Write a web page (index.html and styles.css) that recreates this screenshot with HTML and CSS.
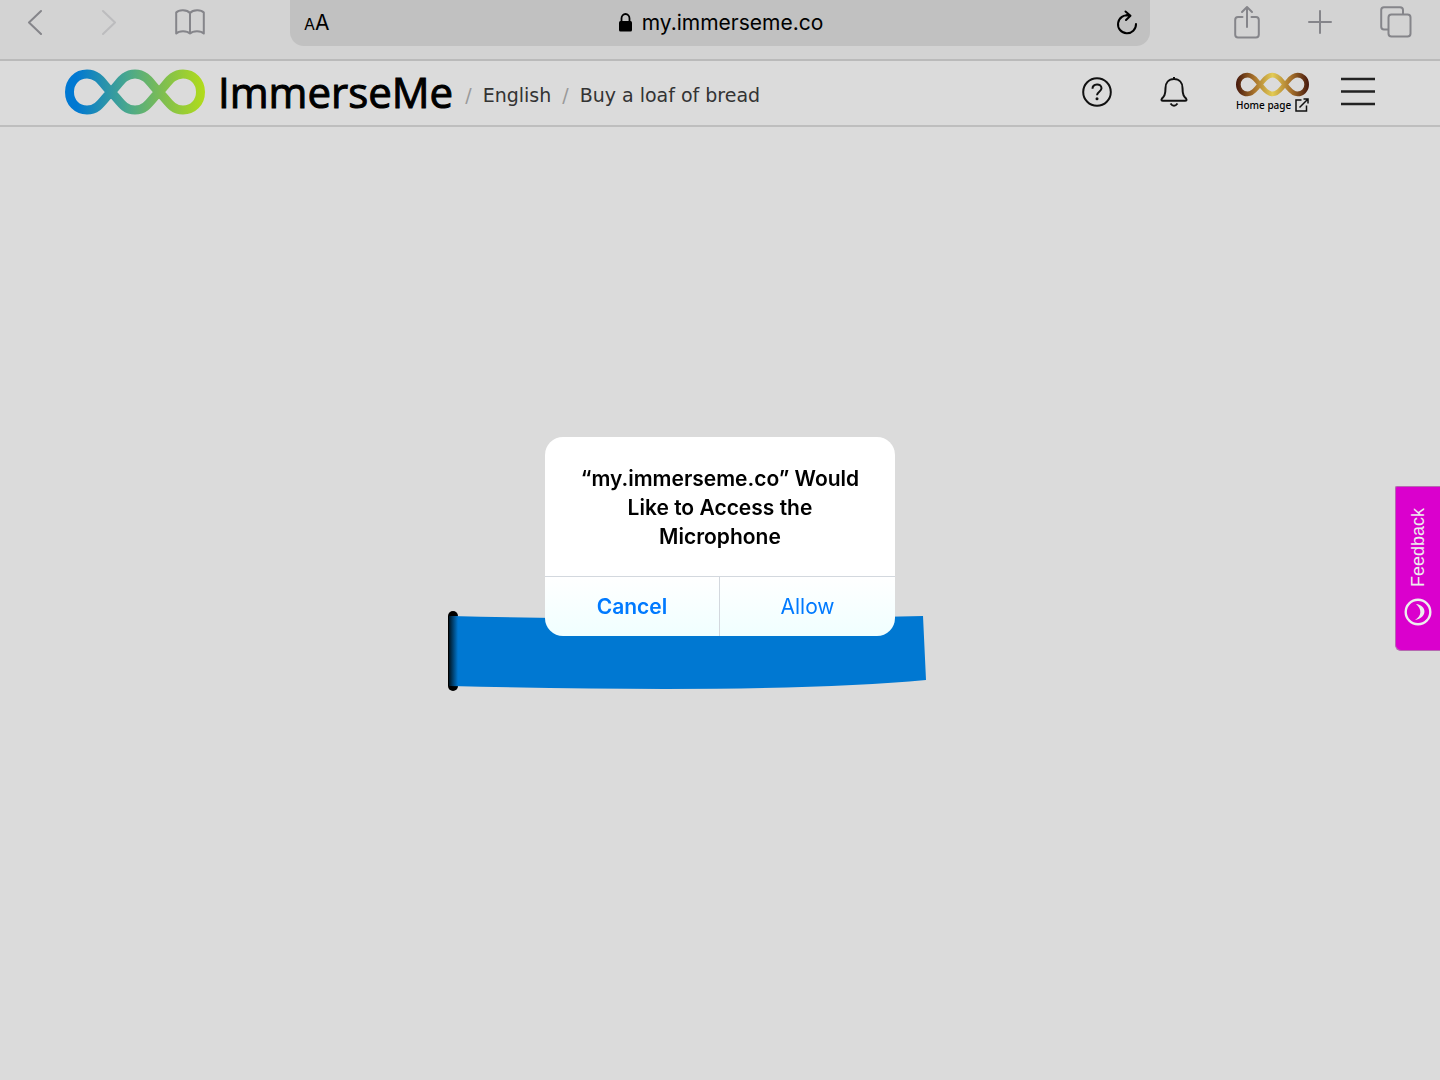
FILE: index.html
```html
<!DOCTYPE html>
<html lang="en">
<head>
    <meta charset="UTF-8">
    <meta name="viewport" content="width=device-width, initial-scale=1.0">
    <title>ImmerseMe</title>
    <link rel="stylesheet" href="styles.css">
</head>
<body>
    <div class="browser-bar">
        <div class="browser-nav">
            <button class="icon-btn" aria-label="Back">
                <svg width="16" height="26" viewBox="0 0 16 26"><path d="M14 2L2 13.500L14 25" /></svg>
            </button>
            <button class="icon-btn faded" aria-label="Forward" disabled>
                <svg width="16" height="26" viewBox="0 0 16 26"><path d="M2 2L14 13.500L2 25" /></svg>
            </button>
            <button class="icon-btn" aria-label="Bookmarks">
                <svg width="30" height="26" viewBox="0 0 30 26"><path d="M15 4C12 .5 4 .3 1.200 3.500V24.500C4 21.500 12 21.500 15 24.500C18 21.500 26 21.500 28.800 24.500V3.500C26 .3 18 .5 15 4V24.500" /></svg>
            </button>
        </div>
        <div class="address-bar">
            <button class="text-size" aria-label="Text size"><small>A</small>A</button>
            <div class="address">
                <svg width="13" height="19" viewBox="0 0 13 19"><rect x="0" y="8" width="13" height="10.500" rx="1.500" /><path d="M2.500 9V5.500a4 4.500 0 0 1 8 0V9" fill="none" stroke="#000" stroke-width="1.800" /></svg>
                <span>my.immerseme.co</span>
            </div>
            <button class="icon-btn reload" aria-label="Reload">
                <svg width="22" height="26" viewBox="0 0 22 26"><path d="M20 14A9 9 0 1 1 13 5.500L10 5.200M9.500 1.500L14.500 5.700L10 10" /></svg>
            </button>
        </div>
        <div class="browser-actions">
            <button class="icon-btn" aria-label="Share">
                <svg width="26" height="34" viewBox="0 0 26 34"><path d="M8.500 12H4Q1.200 12 1.200 15V29.500Q1.200 32.500 4 32.500H22Q24.800 32.500 24.800 29.500V15Q24.800 12 22 12H17.500M13 22V2M8 7L13 2L18 7" /></svg>
            </button>
            <button class="icon-btn" aria-label="New tab">
                <svg width="24" height="24" viewBox="0 0 24 24"><path d="M12 1V23M1 12H23" /></svg>
            </button>
            <button class="icon-btn" aria-label="Tabs">
                <svg width="32" height="32" viewBox="0 0 32 32"><rect x="8.500" y="8.500" width="22" height="22" rx="3" /><path d="M8 23.500H4Q1.200 23.500 1.200 20.500V4Q1.200 1.200 4 1.200H20Q23 1.200 23 4V8" /></svg>
            </button>
        </div>
    </div>

    <header class="site-header">
        <a class="brand" href="#">
            <svg class="loops" width="140" height="46" viewBox="0 0 140 45">
                <defs>
                    <linearGradient id="brand-color" gradientUnits="userSpaceOnUse" x1="0" y1="0" x2="140" y2="0">
                        <stop offset="0.080" stop-color="#0078d2" />
                        <stop offset="0.450" stop-color="#4aa88c" />
                        <stop offset="0.700" stop-color="#7fbe50" />
                        <stop offset="1" stop-color="#b2dc1a" />
                    </linearGradient>
                    <path id="loops" d="M4.500 22.500C4.500 12 12 4.500 22 4.500C34 4.500 38 15 46 22.500C54 30 58 40.500 70 40.500C82 40.500 86 30 94 22.500C102 15 106 4.500 118 4.500C128 4.500 135.500 12 135.500 22.500C135.500 33 128 40.500 118 40.500C106 40.500 102 30 94 22.500C86 15 82 4.500 70 4.500C58 4.500 54 15 46 22.500C38 30 34 40.500 22 40.500C12 40.500 4.500 33 4.500 22.500Z" />
                </defs>
                <use href="#loops" stroke="url(#brand-color)" />
            </svg>
            <span class="brand-name">ImmerseMe</span>
        </a>
        <nav class="breadcrumb" aria-label="Breadcrumb">
            <span class="slash">/</span>
            <a href="#">English</a>
            <span class="slash">/</span>
            <a href="#">Buy a loaf of bread</a>
        </nav>
        <div class="header-tools">
            <button class="tool" aria-label="Help">
                <svg width="30" height="30" viewBox="0 0 30 30"><circle cx="15" cy="15" r="13.800" /><path d="M10.500 11.800C10.500 6 19.500 6 19.500 11.300C19.500 14.700 15 14.700 15 18.200" stroke-width="2" /><circle class="dot" cx="15" cy="21.800" r="1.500" /></svg>
            </button>
            <button class="tool" aria-label="Notifications">
                <svg width="28" height="30" viewBox="0 0 28 30"><path d="M14 0V2M14 2C8.500 2 5.500 6 5.500 11C5.500 18 4 19.500 2 21.500Q.5 23.800 3 23.800H25Q27.500 23.800 26 21.500C24 19.500 22.500 18 22.500 11C22.500 6 19.500 2 14 2ZM10.500 26.500Q14 31 17.500 26.500" /></svg>
            </button>
            <a class="home-link" href="#">
                <svg class="loops" width="73" height="25" viewBox="0 0 140 45">
                    <defs>
                        <linearGradient id="gold-color" gradientUnits="userSpaceOnUse" x1="0" y1="0" x2="140" y2="0">
                            <stop offset="0" stop-color="#45170c" />
                            <stop offset="0.250" stop-color="#a8732c" />
                            <stop offset="0.500" stop-color="#e2cb55" />
                            <stop offset="0.750" stop-color="#a8732c" />
                            <stop offset="1" stop-color="#45170c" />
                        </linearGradient>
                    </defs>
                    <use href="#loops" stroke="url(#gold-color)" />
                </svg>
                <span class="home-label">
                    Home page
                    <svg width="14" height="14" viewBox="0 0 14 14"><path d="M6.500 2H1V13H11.500V7.500M4.500 9.500L13 1M8.500 1H13V5.500" /></svg>
                </span>
            </a>
            <button class="tool" aria-label="Menu">
                <svg width="34" height="30" viewBox="0 0 34 30"><path d="M0 2H34M0 14.500H34M0 27H34" stroke="#222" stroke-width="2.400" /></svg>
            </button>
        </div>
    </header>

    <main class="stage">
        <!-- page-turning loader -->
        <svg class="loader" width="544" height="82" viewBox="0 0 544 82" role="img" aria-label="Loading">
            <defs>
                <linearGradient id="spine" x1="0" x2="1" y1="0" y2="0">
                    <stop offset="0" stop-color="#001522" />
                    <stop offset="1" stop-color="#0078d2" />
                </linearGradient>
            </defs>
            <path d="M5 5V75" stroke="#000" stroke-width="10" stroke-linecap="round" />
            <path d="M3 5Q250 11 475 5L478 69Q330 83 3 75Z" fill="#0078d2" />
            <rect x="1" y="5" width="9" height="70" fill="url(#spine)" />
        </svg>
    </main>

    <button class="feedback">
        <svg width="28" height="28" viewBox="0 0 28 28"><circle cx="14" cy="14" r="12.300" fill="none" stroke="#eee" stroke-width="2.400" /><path d="M12 6C23 7 24 20 11 22C18 18 18 11 12 6Z" fill="#eee" /></svg>
        <span>Feedback</span>
    </button>

    <div class="overlay">
        <div class="dialog" role="alertdialog" aria-labelledby="dialog-title">
            <h1 id="dialog-title">“my.immerseme.co” Would Like to Access the Microphone</h1>
            <div class="dialog-buttons">
                <button class="cancel">Cancel</button>
                <button>Allow</button>
            </div>
        </div>
    </div>
</body>
</html>
```
FILE: styles.css
```css
* {
    box-sizing: border-box;
}
body {
    margin: 0;
    min-height: 100vh;
    display: flex;
    flex-direction: column;
    background-color: #dbdbdb;
    color: #000;
    font-family: Inter, "Liberation Sans", sans-serif;
}
button {
    padding: 0;
    border: none;
    background: none;
    color: inherit;
    font-family: inherit;
    cursor: pointer;
}
a {
    color: inherit;
    text-decoration: none;
}
svg {
    display: block;
    flex: none;
}

/* Browser toolbar */
.browser-bar {
    display: grid;
    grid-template-columns: 290px 1fr 290px;
    height: 61px;
    background-color: #d3d3d3;
    border-bottom: 2px solid #bababa;
}
.browser-nav, .browser-actions {
    display: flex;
    align-items: center;
    height: 44px;
}
.browser-nav {
    gap: 58px;
    padding-left: 27px;
}
.browser-actions {
    justify-content: flex-end;
    gap: 48px;
    padding-right: 28px;
}
.icon-btn svg {
    fill: none;
    stroke: #85858a;
    stroke-width: 2;
    stroke-linecap: round;
    stroke-linejoin: round;
}
.icon-btn.faded svg {
    stroke: #bcbcbe;
}
.icon-btn.reload svg {
    stroke: #000;
}
.address-bar {
    display: grid;
    grid-template-columns: 1fr auto 1fr;
    align-items: center;
    height: 46px;
    padding: 0 12px 1px 14px;
    background-color: #c1c1c1;
    border-radius: 0 0 14px 14px;
}
.text-size {
    justify-self: start;
    font-size: 21px;
}
.text-size small {
    font-size: 16px;
}
.reload {
    justify-self: end;
}
.address {
    display: flex;
    align-items: center;
    gap: 10px;
    font-size: 21px;
}

/* Site header */
.site-header {
    display: flex;
    align-items: center;
    height: 66px;
    padding: 0 65px 2px;
    border-bottom: 2px solid #bebebe;
}
.brand {
    display: flex;
    align-items: center;
    gap: 13px;
}
.loops {
    fill: none;
    stroke-width: 9;
}
.brand-name {
    font-family: "Open Sans", sans-serif;
    font-size: 42px;
    font-weight: 500;
    line-height: 60px;
    -webkit-text-stroke: 1px #000;
}
.breadcrumb {
    display: flex;
    gap: 11px;
    padding: 5px 0 0 12px;
    color: #333;
    font-family: Verdana, "DejaVu Sans", sans-serif;
    font-size: 19px;
    white-space: nowrap;
}
.slash {
    color: #999;
}
.header-tools {
    display: flex;
    align-items: center;
    gap: 48px;
    margin-left: auto;
}
.tool svg {
    fill: none;
    stroke: #111;
    stroke-width: 2;
}
.tool .dot {
    fill: #111;
    stroke: none;
}
.home-link {
    display: flex;
    flex-direction: column;
    gap: 1px;
    margin-right: -16px;
}
.home-label {
    display: flex;
    align-items: center;
    justify-content: space-between;
    font-family: "Noto Sans", sans-serif;
    font-size: 10px;
    font-weight: 500;
    line-height: 14px;
    white-space: nowrap;
}
.home-label svg {
    fill: none;
    stroke: #111;
    stroke-width: 1.5;
}

/* Loader */
.stage {
    flex: 1;
    display: flex;
    align-items: center;
    justify-content: center;
    padding-top: 96px;
}

/* Feedback tab */
.feedback {
    position: fixed;
    top: 45%;
    right: 0;
    display: flex;
    flex-direction: column-reverse;
    align-items: center;
    justify-content: space-between;
    width: 45px;
    height: 165px;
    padding: 21px 0 24px;
    background-color: #da00cd;
    border: 1px solid #b56ab0;
    border-right: none;
    border-radius: 2px 0 0 6px;
    color: #eee;
    font-family: "Liberation Sans", Arial, sans-serif;
    font-size: 18px;
}
.feedback span {
    writing-mode: vertical-rl;
    transform: rotate(180deg);
}

/* Permission dialog */
.overlay {
    position: fixed;
    inset: 0;
    display: flex;
    align-items: center;
    justify-content: center;
    padding-bottom: 7px;
    pointer-events: none;
}
.dialog {
    width: 350px;
    overflow: hidden;
    border-radius: 18px;
    background: linear-gradient(#fff 70%, #f0ffff);
    text-align: center;
    pointer-events: auto;
}
.dialog h1 {
    margin: 0;
    padding: 27px 24px 25px;
    font-size: 21px;
    font-weight: 600;
    line-height: 29px;
}
.dialog-buttons {
    display: grid;
    grid-template-columns: 1fr 1fr;
    border-top: 1px solid #d3d8de;
}
.dialog-buttons button {
    height: 59px;
    color: #007aff;
    font-size: 21px;
}
.dialog-buttons .cancel {
    border-right: 1px solid #d3d8de;
    font-weight: 600;
}
```
